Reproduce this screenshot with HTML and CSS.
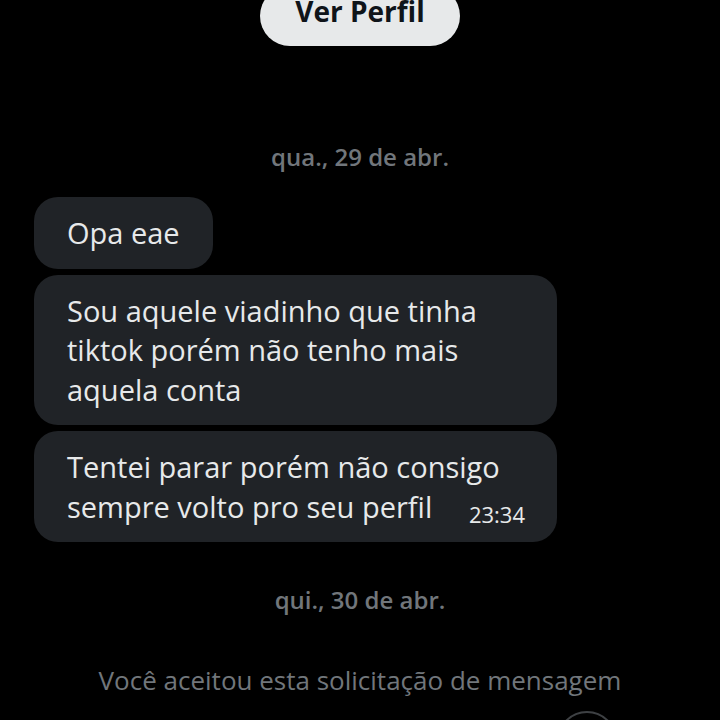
FILE: index.html
```html
<!doctype html>
<html lang="pt">
  <head>
    <meta charset="UTF-8" />
    <meta name="viewport" content="width=device-width, initial-scale=1.0" />
    <title>Mensagens</title>
    <link rel="stylesheet" href="styles.css">
  </head>
  <body>
    <div class="chat">
      <div class="profile-row">
        <button type="button" class="profile-btn">Ver Perfil</button>
      </div>
      <div class="day-label first">qua., 29 de abr.</div>
      <div class="messages">
        <div class="bubble">Opa eae</div>
        <div class="bubble">Sou aquele viadinho que tinha tiktok porém não tenho mais aquela conta</div>
        <div class="bubble">Tentei parar porém não consigo sempre volto pro seu perfil<span class="time">23:34</span></div>
      </div>
      <div class="day-label">qui., 30 de abr.</div>
      <div class="notice">Você aceitou esta solicitação de mensagem</div>
      <div class="scroll-btn"></div>
    </div>
  </body>
</html>
```

FILE: styles.css
```css
body {
  margin: 0;
  background: #000;
  font-family: "Open Sans", "Noto Sans", sans-serif;
  color: #e7e9ea;
}
.chat {
  position: relative;
  width: 720px;
  height: 720px;
  overflow: hidden;
}
.profile-row {
  display: flex;
  justify-content: center;
  margin-top: -14px;
}
.profile-btn {
  width: 200px;
  height: 60px;
  border: none;
  border-radius: 30px;
  background: #e7e9ea;
  color: #0f1419;
  font-family: inherit;
  font-size: 28px;
  font-weight: 700;
  padding: 0 0 10px;
}
.day-label {
  text-align: center;
  color: #71767b;
  font-size: 24px;
  font-weight: 600;
  line-height: 30px;
  margin-top: 43px;
}
.day-label.first {
  margin-top: 96px;
}
.messages {
  display: flex;
  flex-direction: column;
  align-items: flex-start;
  gap: 6px;
  padding-left: 34px;
  margin-top: 25px;
}
.bubble {
  max-width: 457px;
  background: #202327;
  border-radius: 24px;
  padding: 16px 33px;
  font-size: 29px;
  line-height: 39.5px;
}
.time {
  float: right;
  font-size: 22px;
  line-height: 22px;
  margin-top: 16px;
  margin-right: -1px;
  color: #e7e9ea;
}
.notice {
  text-align: center;
  color: #71767b;
  font-size: 26px;
  line-height: 30px;
  margin-top: 50px;
}
.scroll-btn {
  position: absolute;
  left: 557px;
  top: 711px;
  width: 56px;
  height: 56px;
  border: 2px solid #3e4144;
  border-radius: 50%;
}
```
